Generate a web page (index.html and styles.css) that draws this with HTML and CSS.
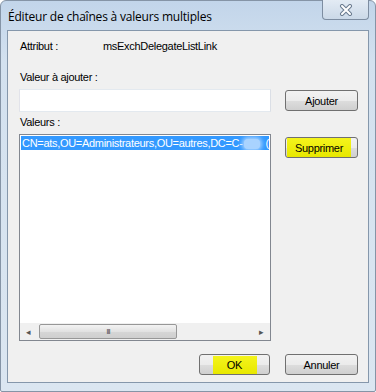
FILE: index.html
```html
<!DOCTYPE html>
<html lang="fr">
<head>
    <meta charset="UTF-8">
    <title>Éditeur de chaînes à valeurs multiples</title>
    <link rel="stylesheet" href="styles.css">
</head>
<body>
    <div class="janela">
        <div class="barraTitulo">
            <div class="titulo">Éditeur de chaînes à valeurs multiples</div>
            <button class="fechar">
                <svg width="16" height="12" viewBox="0 0 16 12">
                    <path d="M4 2 L12 10 M12 2 L4 10" stroke="#6a7b8f" stroke-width="4" stroke-linecap="round"/>
                    <path d="M4 2 L12 10 M12 2 L4 10" stroke="#ffffff" stroke-width="2" stroke-linecap="round"/>
                </svg>
            </button>
        </div>

        <div class="cliente">
            <div class="linhaAtributo">
                <span class="rotuloAtributo">Attribut :</span>
                <span>msExchDelegateListLink</span>
            </div>

            <div class="rotulo rotuloValeur">Valeur à ajouter :</div>
            <div class="linha">
                <input class="campo" type="text">
                <button class="botao botaoAjouter">Ajouter</button>
            </div>

            <div class="rotulo rotuloValeurs">Valeurs :</div>
            <div class="linha">
                <div class="lista">
                    <div class="itens">
                        <div class="item">CN=ats,OU=Administrateurs,OU=autres,DC=C-<span class="borrado"></span>(</div>
                    </div>
                    <div class="rolagem">
                        <span class="seta">&#9666;</span>
                        <div class="trilho">
                            <div class="polegar"><span class="grip">III</span></div>
                        </div>
                        <span class="seta">&#9656;</span>
                    </div>
                </div>
                <button class="botao botaoSupprimer"><span class="marcador">Supprimer</span></button>
            </div>

            <div class="rodape">
                <button class="botao botaoOk"><span class="marcador marcadorOk">OK</span></button>
                <button class="botao">Annuler</button>
            </div>
        </div>
    </div>
</body>
</html>
```

FILE: styles.css
```css
body {
  margin: 0;
  font-family: "Liberation Sans", Arial, sans-serif;
  font-size: 11px;
  letter-spacing: -0.3px;
  color: #000;
  background: #fff;
}
.janela {
  width: 376px;
  height: 392px;
  box-sizing: border-box;
  background: linear-gradient(to bottom, #c2d5ea 0px, #d3e1ef 60px, #dbe6f1 392px);
  border: 1px solid #8594a6;
  border-radius: 6px 6px 2px 2px;
  display: flex;
  flex-direction: column;
}
.barraTitulo {
  height: 29px;
  display: flex;
  justify-content: space-between;
  align-items: flex-start;
}
.titulo {
  font-family: "Open Sans", "Noto Sans", sans-serif;
  font-size: 12px;
  padding: 7px 0 0 7px;
  letter-spacing: -0.2px;
}
.fechar {
  width: 47px;
  height: 20px;
  margin: -1px 6px 0 0;
  border: 1px solid #7d8da1;
  border-top: none;
  border-radius: 0 0 4px 4px;
  background: linear-gradient(to bottom, #e3ebf4, #cbd9e8);
  display: flex;
  align-items: center;
  justify-content: center;
  padding: 0;
}
.cliente {
  margin: 0 6px 0 6px;
  height: 353px;
  box-sizing: border-box;
  background: #f0f0f0;
  border: 1px solid #8597ab;
  padding: 9px 10px 0 11px;
}
.linhaAtributo {
  display: flex;
  height: 14px;
  padding-left: 1px;
}
.rotuloAtributo {
  width: 83px;
}
.rotulo {
  padding-left: 1px;
  height: 14px;
}
.rotuloValeur {
  margin-top: 17px;
}
.rotuloValeurs {
  margin-top: 4px;
}
.linha {
  display: flex;
  justify-content: space-between;
  align-items: flex-start;
  margin-top: 4px;
}
.campo {
  width: 252px;
  height: 23px;
  box-sizing: border-box;
  border: 1px solid #abadb3;
  border-top-color: #e3e9ef;
  border-left-color: #e2e3ea;
  border-right-color: #dbdfe6;
  border-bottom-color: #e3e9ef;
  background: #fff;
  margin: 0;
}
.botao {
  width: 73px;
  height: 21px;
  box-sizing: border-box;
  border: 1px solid #707070;
  border-radius: 3px;
  background: linear-gradient(to bottom, #f2f2f2 0%, #ebebeb 50%, #dddddd 51%, #cfcfcf 100%);
  font-family: "Liberation Sans", Arial, sans-serif;
  font-size: 11px;
  letter-spacing: -0.3px;
  color: #000;
  padding: 0;
  display: flex;
  align-items: center;
  justify-content: center;
}
.botaoAjouter {
  margin-top: 1px;
}
.lista {
  width: 252px;
  height: 207px;
  box-sizing: border-box;
  border: 1px solid #828790;
  background: #fff;
  display: flex;
  flex-direction: column;
}
.itens {
  flex: 1;
  padding: 1px 1px 0 1px;
}
.item {
  background: #3399ff;
  color: #fff;
  height: 14px;
  line-height: 14px;
  white-space: nowrap;
  overflow: hidden;
  padding-left: 1px;
}
.borrado {
  display: inline-block;
  width: 16px;
  height: 10px;
  background: #a9d3ff;
  vertical-align: middle;
  margin: 0 6px 0 1px;
  border-radius: 4px;
  box-shadow: 0 0 4px 2px #a9d3ff;
}
.rolagem {
  height: 17px;
  display: flex;
  align-items: center;
  background: #f0f0f0;
}
.seta {
  width: 17px;
  text-align: center;
  color: #555;
  font-size: 9px;
}
.trilho {
  flex: 1;
  height: 15px;
}
.polegar {
  width: 138px;
  height: 15px;
  box-sizing: border-box;
  border: 1px solid #979797;
  border-radius: 2px;
  background: linear-gradient(to bottom, #f3f3f3, #e2e2e2 50%, #d6d6d6 51%, #cfcfcf);
  display: flex;
  align-items: center;
  justify-content: center;
  margin-left: 2px;
}
.grip {
  font-size: 8px;
  color: #555;
  letter-spacing: -1px;
}
.botaoSupprimer {
  margin-top: 3px;
  justify-content: flex-start;
  padding-left: 1px;
}
.marcador {
  background: linear-gradient(to bottom, #f4f41c, #e8e800);
  display: flex;
  align-items: center;
  justify-content: center;
  height: 19px;
  width: 64px;
}
.marcadorOk {
  width: 44px;
  height: 18px;
}
.rodape {
  display: flex;
  justify-content: flex-end;
  gap: 15px;
  margin-top: 13px;
}
.botaoOk {
  width: 71px;
}
```
